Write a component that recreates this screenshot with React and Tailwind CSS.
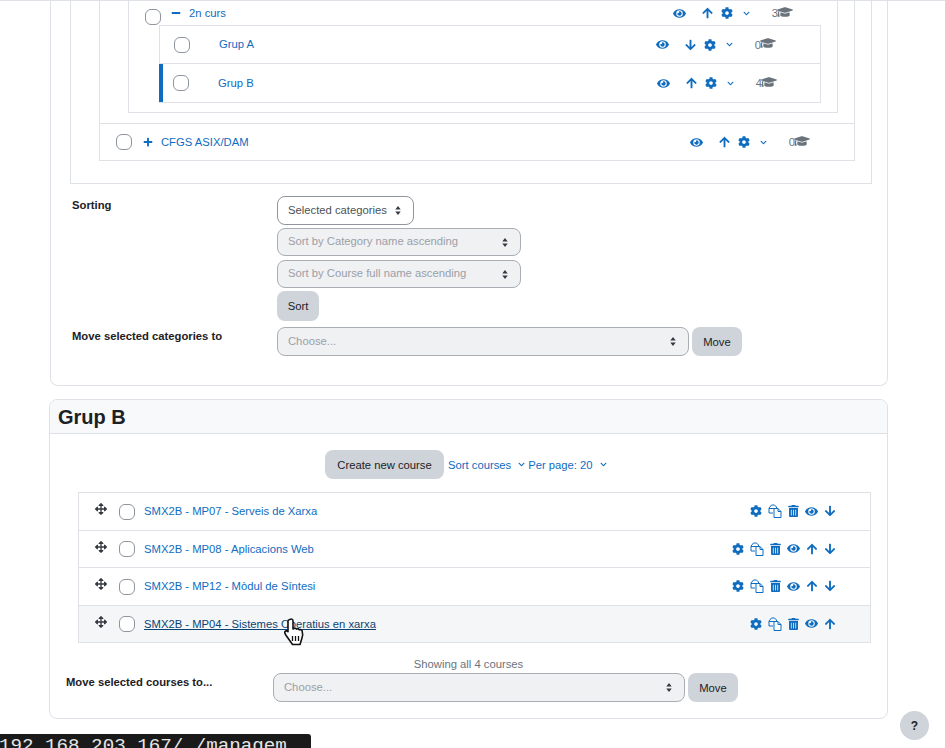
import React from 'react';
import { FaEye, FaArrowUp, FaArrowDown, FaCog, FaGraduationCap, FaPlus, FaMinus, FaArrowsAlt, FaTrashAlt, FaChevronDown } from 'react-icons/fa';

const Check = ({ className = '' }) => (
  <span className={`block w-4 h-4 shrink-0 rounded-[6px] border border-[#8f959e] bg-white ${className}`} />
);

const CopyIcon = () => (
  <svg viewBox="0 0 14 14" className="w-[14px] h-[14px]" fill="none" stroke="currentColor" strokeWidth="1">
    <path d="M3.5 1h3l2 2v1.5M6 4.5H1l0-0.5 2.5-3M1 4.5v4.5h4" />
    <path d="M6 4.5h4l3 3v6H6z" fill="#fff" />
    <path d="M10 4.5v3h3" />
  </svg>
);

const Hand = () => (
  <svg viewBox="0 0 24 30" className="absolute left-[283px] top-[617px] w-[24px] h-[30px]">
    <path d="M7 2.500c1.200-1 3-.5 3 1.500v8l1-.5c1-.4 2 0 2.500.6 1-.6 2.300-.2 2.800.7 1-.5 2.400-.1 2.800 1 .7 2 .6 5.500-.4 8.200L17 27.500H9.500L3.500 19c-1-1.500-2.500-3-1.500-4.500.8-1 2.200-.7 3 .2V4c0-.7.500-1.200 2-1.500z" fill="#fff" stroke="#111" strokeWidth="1.600" strokeLinejoin="round" />
    <path d="M9.500 19v5M12.500 19v5M15.500 19v5" stroke="#111" strokeWidth="1.300" />
  </svg>
);

const Actions = ({ arrow, count, mr }) => (
  <div className={`flex items-center text-[#0f6cbf] ${mr}`}>
    <FaEye className="w-[13px] h-[13px]" />
    <span className="w-[16px]" />
    {arrow === 'up' ? <FaArrowUp className="w-[11px] h-[12px]" /> : <FaArrowDown className="w-[11px] h-[12px]" />}
    <span className="w-[8px]" />
    <FaCog className="w-[12px] h-[12px]" />
    <span className="w-[10px]" />
    <FaChevronDown className="w-[7px] h-[7px]" />
    <span className="w-[22px]" />
    <span className="text-[#6a737b]">{count}</span>
    <FaGraduationCap className="w-[16px] h-[14px] text-[#6a737b] -ml-[1px] -mt-[3px]" />
  </div>
);

const Select = ({ w, h = 'h-[29px]', disabled = false, children, className = '' }) => (
  <div className={`flex items-center justify-between ${h} pl-[10px] pr-[12px] rounded-[8px] border ${disabled ? 'border-[#a9adb4] bg-[#f0f1f3] text-[#9b9fa6]' : 'border-[#8f959e] bg-white text-[#4b5157]'} ${w} ${className}`}>
    <span className="-mt-[2px]">{children}</span>
    <svg viewBox="0 0 6 10" className="w-[6px] h-[9px]"><path d="M3 0l3 4H0zM3 10l3-4H0z" fill="#343a40" /></svg>
  </div>
);

const Btn = ({ className = '', children }) => (
  <div className={`flex items-center justify-center rounded-[8px] bg-[#ced4da] text-[#1d2125] ${className}`}>{children}</div>
);

const CourseRow = ({ name, up, down, hover }) => (
  <div className={`flex items-center h-[37.500px] border-b border-[#dee2e6] ${hover ? 'bg-[#f5f6f8]' : ''}`}>
    <FaArrowsAlt className="ml-[16px] w-[12px] h-[12px] text-[#343a40] -mt-[4px]" />
    <Check className="ml-[12px] mt-[1px]" />
    <span className={`ml-[9px] flex-1 ${hover ? 'text-[#0a4474] underline' : 'text-[#0f6cbf]'}`}>{name}</span>
    <div className="flex items-center text-[#0f6cbf] gap-[6px] mr-[34px]">
      <FaCog className="w-[12px] h-[12px]" />
      <CopyIcon />
      <FaTrashAlt className="w-[11px] h-[12px]" />
      <FaEye className="w-[13px] h-[13px]" />
      {up && <FaArrowUp className="w-[12px] h-[12px]" />}
      {down && <FaArrowDown className="w-[12px] h-[12px]" />}
    </div>
  </div>
);

const courses = [
  { name: 'SMX2B - MP07 - Serveis de Xarxa', down: true },
  { name: 'SMX2B - MP08 - Aplicacions Web', up: true, down: true },
  { name: 'SMX2B - MP12 - Mòdul de Síntesi', up: true, down: true },
  { name: 'SMX2B - MP04 - Sistemes Operatius en xarxa', up: true, hover: true },
];

export default function App() {
  return (
    <div className="relative h-[748px] w-[945px] overflow-hidden bg-white font-['Liberation_Sans',sans-serif] text-[11.250px] leading-[18px] text-[#1d2125]">
      <div className="border-t border-[#dee2e6]">
        <div className="ml-[50px] w-[838px] h-[385px] border-x border-b border-[#dee2e6] rounded-b-[8px]">
          <div className="ml-[19px] w-[802px] h-[183px] border-x border-b border-[#dee2e6]">
            <div className="ml-[28px] w-[756px] h-[160px] border-x border-b border-[#dee2e6]">
              <div className="ml-[28px] w-[710px] h-[112px] border-x border-b border-[#dee2e6]">
                <div className="flex items-center h-[24px] pl-[16px]">
                  <Check className="mt-[7px]" />
                  <FaMinus className="ml-[10px] w-[10px] h-[10px] text-[#0f6cbf]" />
                  <span className="ml-[8px] text-[#0f6cbf] flex-1">2n curs</span>
                  <Actions arrow="up" count="3" mr="mr-[44px]" />
                </div>
                <div className="ml-[30px] w-[662px] border border-[#dee2e6]">
                  <div className="flex items-center h-[38px] border-b border-[#dee2e6] pl-[14px]">
                    <Check />
                    <span className="ml-[29px] text-[#0f6cbf] flex-1 -mt-[1px]">Grup A</span>
                    <Actions arrow="down" count="0" mr="mr-[44px]" />
                  </div>
                  <div className="flex items-center h-[38px] border-l-[4px] -ml-[1px] border-[#0f6cbf] pl-[10px]">
                    <Check />
                    <span className="ml-[29px] text-[#0f6cbf] flex-1 -mt-[1px]">Grup B</span>
                    <Actions arrow="up" count="4" mr="mr-[43px]" />
                  </div>
                </div>
              </div>
              <div className="mt-[10px] flex items-center h-[37px] border-t border-[#dee2e6] pl-[16px]">
                <Check />
                <FaPlus className="ml-[11px] w-[10px] h-[10px] text-[#0f6cbf] -mt-[1px]" />
                <span className="ml-[8px] text-[#0f6cbf] flex-1">CFGS ASIX/DAM</span>
                <Actions arrow="up" count="0" mr="mr-[44px]" />
              </div>
            </div>
          </div>

          <div className="flex mt-[12px] ml-[21px]">
            <div className="w-[205px] font-bold">Sorting</div>
            <div className="flex flex-col items-start">
              <Select w="w-[137px]">Selected categories</Select>
              <Select w="w-[244px]" h="h-[28px]" disabled className="mt-[3px]">Sort by Category name ascending</Select>
              <Select w="w-[244px]" h="h-[28px]" disabled className="mt-[4px]">Sort by Course full name ascending</Select>
              <Btn className="mt-[3px] w-[42px] h-[30px]">Sort</Btn>
            </div>
          </div>
          <div className="flex mt-[6px] ml-[21px]">
            <div className="w-[205px] font-bold pr-[50px]">Move selected categories to</div>
            <div className="flex items-start gap-[3px]">
              <Select w="w-[412px]" disabled>Choose...</Select>
              <Btn className="w-[50px] h-[29px]">Move</Btn>
            </div>
          </div>
        </div>

        <div className="ml-[49px] w-[839px] h-[320px] mt-[13px] border border-[#dee2e6] rounded-[8px] overflow-hidden">
          <div className="h-[34px] bg-[#f8f9fa] border-b border-[#dee2e6] pl-[8px] text-[20px] font-bold leading-[34px]">Grup B</div>
          <div className="flex items-center h-[29px] mt-[16px] ml-[275px]">
            <Btn className="w-[119px] h-[29px]">Create new course</Btn>
            <span className="ml-[4px] text-[#0f6cbf]">Sort courses</span>
            <FaChevronDown className="ml-[7px] w-[7px] h-[7px] text-[#0f6cbf]" />
            <span className="ml-[3px] text-[#0f6cbf]">Per page: 20</span>
            <FaChevronDown className="ml-[7px] w-[7px] h-[7px] text-[#0f6cbf]" />
          </div>
          <div className="ml-[28px] w-[793px] mt-[13px] border border-[#dee2e6] border-b-0">
            {courses.map((c) => <CourseRow key={c.name} {...c} />)}
          </div>
          <div className="text-center text-[#6a737b] mt-[12px] -mb-[1px]">Showing all 4 courses</div>
          <div className="flex mt-[1px] ml-[16px]">
            <div className="w-[207px] font-bold">Move selected courses to...</div>
            <div className="flex items-start gap-[3px]">
              <Select w="w-[412px]" disabled>Choose...</Select>
              <Btn className="w-[50px] h-[29px]">Move</Btn>
            </div>
          </div>
        </div>

        <div className="mt-[15px] w-[311px] h-[30px] bg-[#1a1a1a] rounded-tr-[3px] text-[#e6e6e6] font-['Liberation_Mono',monospace] text-[19.200px] leading-[22px] pt-[1px] whitespace-nowrap overflow-hidden">
          <span className="-ml-[1px] inline-block">192.168.203.167/ /managem</span>
        </div>
      </div>

      <Hand />
      <div className="absolute left-[900px] top-[711px] w-[29px] h-[29px] rounded-full bg-[#ced4da] flex items-center justify-center font-bold text-[12px]">?</div>
    </div>
  );
}
